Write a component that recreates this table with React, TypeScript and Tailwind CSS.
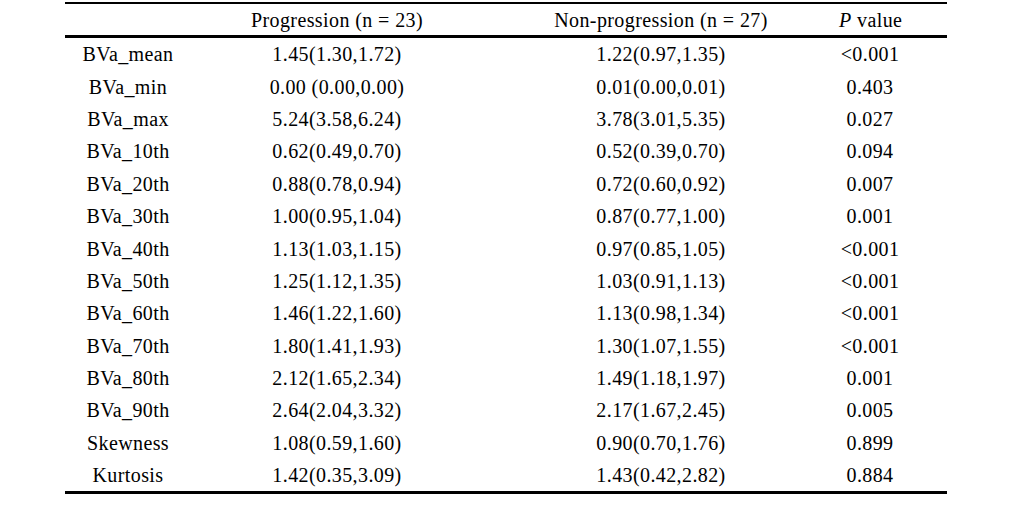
import React from 'react';

const rows: [string, string, string, string][] = [
  ['BVa_mean', '1.45(1.30,1.72)', '1.22(0.97,1.35)', '<0.001'],
  ['BVa_min', '0.00 (0.00,0.00)', '0.01(0.00,0.01)', '0.403'],
  ['BVa_max', '5.24(3.58,6.24)', '3.78(3.01,5.35)', '0.027'],
  ['BVa_10th', '0.62(0.49,0.70)', '0.52(0.39,0.70)', '0.094'],
  ['BVa_20th', '0.88(0.78,0.94)', '0.72(0.60,0.92)', '0.007'],
  ['BVa_30th', '1.00(0.95,1.04)', '0.87(0.77,1.00)', '0.001'],
  ['BVa_40th', '1.13(1.03,1.15)', '0.97(0.85,1.05)', '<0.001'],
  ['BVa_50th', '1.25(1.12,1.35)', '1.03(0.91,1.13)', '<0.001'],
  ['BVa_60th', '1.46(1.22,1.60)', '1.13(0.98,1.34)', '<0.001'],
  ['BVa_70th', '1.80(1.41,1.93)', '1.30(1.07,1.55)', '<0.001'],
  ['BVa_80th', '2.12(1.65,2.34)', '1.49(1.18,1.97)', '0.001'],
  ['BVa_90th', '2.64(2.04,3.32)', '2.17(1.67,2.45)', '0.005'],
  ['Skewness', '1.08(0.59,1.60)', '0.90(0.70,1.76)', '0.899'],
  ['Kurtosis', '1.42(0.35,3.09)', '1.43(0.42,2.82)', '0.884'],
];

const grid = 'grid grid-cols-[126px_292px_356px_108px] items-center whitespace-nowrap leading-none';

export default function App() {
  return (
    <div className="w-[1015px] h-[527px] bg-white text-black font-['Liberation_Serif',serif] text-[20px] tracking-[0.4px]">
      <div className="ml-[65px] pt-[2px] w-[882px]">
        <div className="border-t-2 border-b-[3px] border-black">
          <div className={`${grid} h-[31px]`}>
            <div />
            <div className="text-center">Progression (n = 23)</div>
            <div className="text-center">Non-progression (n = 27)</div>
            <div className="text-center pr-[46px]">
              <span className="italic">P</span> value
            </div>
          </div>
        </div>
        <div className="border-b-[3px] border-black">
          {rows.map((r) => (
            <div key={r[0]} className={`${grid} h-[32.4px]`}>
              <div className="text-center">{r[0]}</div>
              <div className="text-center">{r[1]}</div>
              <div className="text-center">{r[2]}</div>
              <div className="text-center pr-[46px]">{r[3]}</div>
            </div>
          ))}
        </div>
      </div>
    </div>
  );
}
